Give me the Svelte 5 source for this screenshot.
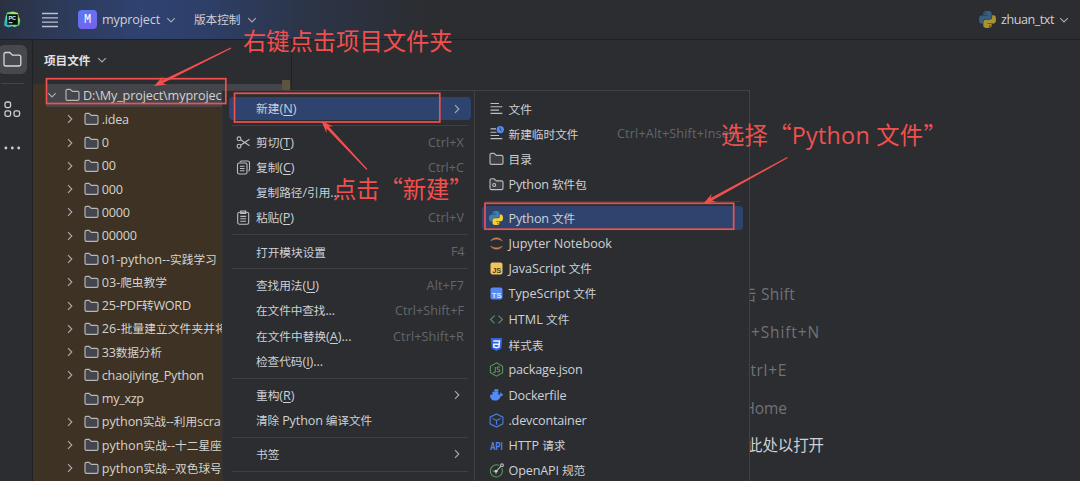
<script>
  const tree = [
    ['.idea', 27], ['0', 7], ['00', 14], ['000', 21], ['0000', 28], ['00000', 35],
    ['01-python--实践学习', 115], ['03-爬虫教学', 65], ['25-PDF转WORD', 89],
    ['26-批量建立文件夹并将', 125], ['33数据分析', 60], ['chaojiying_Python', 102],
    ['my_xzp', 42], ['python实战--利用scra', 119], ['python实战--十二星座', 120],
    ['python实战--双色球号', 120]
  ];

  const menu = [
    { t: '新建(&N)', w: 40.5, sub: true, on: true }, null,
    { t: '剪切(&T)', w: 38, icon: 'cut', key: 'Ctrl+X', kw: 36 },
    { t: '复制(&C)', w: 38.5, icon: 'copy', key: 'Ctrl+C', kw: 36 },
    { t: '复制路径/引用...', w: 84 },
    { t: '粘贴(&P)', w: 38, icon: 'paste', key: 'Ctrl+V', kw: 36 }, null,
    { t: '打开模块设置', w: 70, key: 'F4', kw: 13 }, null,
    { t: '查找用法(&U)', w: 63, key: 'Alt+F7', kw: 37.5 },
    { t: '在文件中查找...', w: 79, key: 'Ctrl+Shift+F', kw: 69 },
    { t: '在文件中替换(&A)...', w: 95.5, key: 'Ctrl+Shift+R', kw: 71 },
    { t: '检查代码(&I)...', w: 67 }, null,
    { t: '重构(&R)', w: 38.5, sub: true },
    { t: '清除 Python 编译文件', w: 116 }, null,
    { t: '书签', w: 23.5, sub: true }, null
  ];

  const files = [
    { t: '文件', w: 23.5, icon: 'lines' },
    { t: '新建临时文件', w: 70, icon: 'scratch', key: 'Ctrl+Alt+Shift+Insert', kw: 122 },
    { t: '目录', w: 23.5, icon: 'dir' },
    { t: 'Python 软件包', w: 78, icon: 'pkg' }, null,
    { t: 'Python 文件', w: 66.5, icon: 'python', on: true },
    { t: 'Jupyter Notebook', w: 103.5, icon: 'jupyter' },
    { t: 'JavaScript 文件', w: 83.5, icon: 'js' },
    { t: 'TypeScript 文件', w: 88, icon: 'ts' },
    { t: 'HTML 文件', w: 61, icon: 'html' },
    { t: '样式表', w: 35, icon: 'css' },
    { t: 'package.json', w: 74, icon: 'node' },
    { t: 'Dockerfile', w: 58, icon: 'docker' },
    { t: '.devcontainer', w: 78, icon: 'cube' },
    { t: 'HTTP 请求', w: 57, icon: 'api' },
    { t: 'OpenAPI 规范', w: 76.5, icon: 'openapi' }
  ];

  const hints = [
    { t: '击 Shift', w: 54, end: 795 },
    { t: 'Ctrl+Shift+N', w: 98, end: 820 },
    { t: 'Ctrl+E', w: 47, end: 787 },
    { t: 'Home', w: 43.5, end: 787 },
    { t: '此处以打开', w: 77, end: 824, strong: true }
  ];

  // Splits a label into Latin and CJK runs; "&" marks the mnemonic letter.
  function runs(text) {
    return (text.match(/&.|[\x20-\x25\x27-\x7e]+|[^\x00-\x7f]+/g) ?? []).map((s) => ({
      s: s[0] === '&' ? s[1] : s,
      latin: s.charCodeAt(0) < 128,
      key: s[0] === '&'
    }));
  }

  // Spreads the letters of a label over the given width.
  function fit(node, width) {
    const n = node.textContent.length;
    const natural = node.getBoundingClientRect().width;
    node.style.letterSpacing = `${(width - natural) / n}px`;
  }

  function arrow(x1, y1, x2, y2) {
    const len = Math.hypot(x2 - x1, y2 - y1);
    const ux = (x2 - x1) / len, uy = (y2 - y1) / len;
    const p = (a, b) => `${(x1 + ux * a - uy * b).toFixed(1)},${(y1 + uy * a + ux * b).toFixed(1)}`;
    return [p(0, -0.6), p(len - 9, -1.4), p(len - 12, -4.6), p(len, 0), p(len - 12, 4.6), p(len - 9, 1.4), p(0, 0.6)].join(' ');
  }
</script>

{#snippet label(text, width)}
  <span class="label" use:fit={width}>{#each runs(text) as r}<span class:latin={r.latin} class:key={r.key}>{r.s}</span>{/each}</span>
{/snippet}

{#snippet chevron(dir)}
  <svg class="chev" width="10" height="10" viewBox="0 0 10 10" fill="none" stroke="currentColor" stroke-width="1.15">
    {#if dir === 'down'}<path d="M1.2 3.2 5 7l3.800-3.800" />{:else}<path d="M3 1.200 6.800 5 3 8.800" />{/if}
  </svg>
{/snippet}

{#snippet folder(fill)}
  <svg width="15" height="14" viewBox="0 0 15 14"><path d="M1 2.700Q1 1.300 2.400 1.300H5.100L7.300 3.400H12.600Q14 3.400 14 4.800V11Q14 12.400 12.600 12.400H2.400Q1 12.400 1 11Z" {fill} stroke="#b9b7b5" stroke-width="1.150" /></svg>
{/snippet}

{#snippet python(size)}
  <svg width={size} height={size} viewBox="0 0 24 24">
    <path fill="#3d7fb0" d="M11.900 0C5.800 0 6.200 2.700 6.200 2.700V5.500H12V6.300H3.900S0 5.800 0 12s3.400 5.900 3.400 5.900h2.100v-2.800s-.1-3.400 3.400-3.400h5.800s3.200.1 3.200-3.100V3.200S18.400 0 11.900 0ZM8.700 1.800a1 1 0 1 1 0 2.100 1 1 0 0 1 0-2.100Z" />
    <path fill="#f5d033" d="M12.100 24c6.100 0 5.700-2.700 5.700-2.700v-2.800H12v-.8h8.100S24 18.200 24 12s-3.400-5.900-3.400-5.900h-2.100v2.800s.1 3.400-3.400 3.400H9.300s-3.200-.1-3.200 3.100v5.400S5.600 24 12.100 24Zm3.200-1.800a1 1 0 1 1 0-2.100 1 1 0 0 1 0 2.100Z" />
  </svg>
{/snippet}

{#snippet icon(name)}
  {#if name === 'dir'}{@render folder('#3c3e43')}
  {:else if name === 'python'}{@render python(14)}
  {:else if name}
    <svg width="15" height="15" viewBox="0 0 15 15" fill="none" stroke="#bcbec4" stroke-width="1.100">
      {#if name === 'cut'}
        <circle cx="3" cy="3.800" r="1.900" /><circle cx="3" cy="11.200" r="1.900" /><path d="M4.700 4.800 13.500 10.800M4.700 10.200 13.500 4.200" />
      {:else if name === 'copy'}
        <path d="M4 2.300V2.200Q4.200 1 5.500 1H11.500Q13.500 1 13.500 3V9.500Q13.500 11 12.300 11.200" /><rect x="1.500" y="3" width="9.500" height="11" rx="1.800" /><path d="M4 6.200h4.500M4 8.500h4.500M4 10.800h4.500" />
      {:else if name === 'paste'}
        <rect x="1.700" y="2.200" width="11" height="12" rx="1.800" /><path d="M4.700 1h5v2.400h-5zM4.300 6.400h5.800M4.300 8.800h5.800M4.300 11.200h5.800" />
      {:else if name === 'lines'}
        <path d="M1.500 2.500H10M1.500 5.800h11.800M1.500 9.100H10M1.500 12.400h11.800" />
      {:else if name === 'scratch'}
        <path d="M1.500 2.900H7M1.500 6.200h6M1.500 9.500H10M1.500 12.600h11.800" /><circle cx="11.300" cy="3.600" r="3.600" fill="#548af7" stroke="none" /><path d="M11.200 1.600v2.300l1.300 1" stroke="#25304a" stroke-width="1" />
      {:else if name === 'pkg'}
        <path d="M1 3.200Q1 1.800 2.400 1.800H5.100L7.300 3.900H12.600Q14 3.900 14 5.300V11.200Q14 12.600 12.600 12.600H2.400Q1 12.600 1 11.200Z" fill="#3c3e43" /><circle cx="5.200" cy="8" r="1.500" />
      {:else if name === 'jupyter'}
        <path d="M1.700 5C4 .7 11 .7 13.300 5 10.500 2.600 4.500 2.600 1.700 5ZM1.700 10C4 14.300 11 14.300 13.300 10 10.500 12.400 4.500 12.400 1.700 10Z" fill="#c77d4e" stroke="#c77d4e" stroke-width=".5" />
      {:else if name === 'js'}
        <rect x="1.500" y="1.500" width="12" height="12" rx="2" fill="#f2c55c" stroke="none" /><text x="7.800" y="11.500" fill="#4a3b1b">JS</text>
      {:else if name === 'ts'}
        <rect x="1.500" y="1.500" width="12" height="12" rx="2" fill="#548af7" stroke="none" /><text x="7.600" y="11.500" fill="#dce8ff">TS</text>
      {:else if name === 'html'}
        <path d="M5.600 3.700 1.500 7.500l4.100 3.800M9.400 3.700l4.100 3.800-4.100 3.800" stroke="#57965c" />
      {:else if name === 'css'}
        <path d="M1.800 1h11.400l-.9 10.600L7.500 14l-4.800-2.400Z" fill="#3262dc" stroke="none" /><path d="M4.300 3.900h6.200l-.5 6-2.500.9-2.700-.9-.1-2.600h5.400" stroke="#eaf0ff" stroke-width="1.500" />
      {:else if name === 'node'}
        <path d="M7.500.8 13.600 4.200v6.600L7.500 14.200 1.400 10.800V4.200Z" stroke="#57965c" /><path d="M6.300 4.900v4.600q0 1-1 1t-1.200-.7M10.700 5.600Q10.300 4.800 9.300 4.900q-1.300 0-1.200 1.100c.1 1.600 2.800.8 2.800 2.700 0 1.400-2.300 1.400-2.900.2" stroke="#57965c" />
      {:else if name === 'docker'}
        <path d="M1 6.800h10.200q-.5-1.400.3-2.600 1.100.7 1.200 1.800 1 0 1.600.4-.6 1.500-2.500 1.500c-1 3.500-3.500 4.700-6 4.700C2.800 12.600 1.100 10.500 1 6.800ZM3.400 3.800h4.400v3H3.400zM5.300 1.200h4v2.400h-4zM7.800 3.800h1.600v3H7.800z" fill="#548af7" stroke="none" />
      {:else if name === 'cube'}
        <path d="M7.500.9 13.900 4.200v6.600L7.500 14.100 1.100 10.800V4.200ZM3.500 5.400l4 2 4-2M7.500 7.400v4.400" stroke="#4a7ee0" />
      {:else if name === 'api'}
        <text class="api" x="7.600" y="11.800" fill="#5086ee" textLength="12.500" lengthAdjust="spacingAndGlyphs">API</text>
      {:else if name === 'openapi'}
        <path d="M10.200 2.500A6.100 6.100 0 1 0 12.900 5.300" stroke="#57965c" /><path d="M3.500 8h2M7 11.500v-1.600" stroke="#57965c" /><path d="m7.300 8.200 4.800-5" /><circle cx="13" cy="2.300" r="1.400" /><circle cx="7" cy="8.300" r="1.500" fill="#ced0d6" stroke="none" />
      {/if}
    </svg>
  {/if}
{/snippet}

{#snippet entries(items)}
  {#each items as it}
    {#if it}
      <div class="item" class:on={it.on}>
        <span class="ico">{@render icon(it.icon)}</span>
        {@render label(it.t, it.w)}
        {#if it.key}<span class="shortcut">{@render label(it.key, it.kw)}</span>{/if}
        {#if it.sub}<span class="more">{@render chevron('right')}</span>{/if}
      </div>
    {:else}
      <div class="sep"></div>
    {/if}
  {/each}
{/snippet}

<div class="ide">
  <header>
    <svg class="logo" width="17" height="17" viewBox="0 0 17 17">
      <defs><linearGradient id="lg" x1="0" y1="0" x2="1" y2="1"><stop offset="0" stop-color="#21d789" /><stop offset=".5" stop-color="#d8ef55" /><stop offset="1" stop-color="#27c9a0" /></linearGradient></defs>
      <path d="M3 1.500 9 .4l5 1.500.6 3.900L16.300 9l-1 5.300-5 2-2-1.300-3.500 1.300L.6 14.800.8 9.500Z" fill="url(#lg)" />
      <path d="M.8 9.500 2 4l1 9 5 2-3.200 1.300L.6 14.800Z" fill="#18b9e8" />
      <rect x="3.200" y="3.200" width="10.600" height="10.600" fill="#07110e" />
      <text x="8.200" y="8.600" fill="#e7f0ea">PC</text><path d="M4.700 11.700h3.800" stroke="#e7f0ea" />
    </svg>
    <svg class="burger" width="16" height="16" viewBox="0 0 16 16" stroke="#b9c0ce" stroke-width="1.300"><path d="M0 1.500h16M0 5.800h16M0 10.200h16M0 14.500h16" /></svg>
    <span class="badge">M</span>
    <span class="proj">{@render label('myproject', 58)}</span>
    {@render chevron('down')}
    <span class="vcs">{@render label('版本控制', 46.500)}</span>
    {@render chevron('down')}
    <div class="config">
      <span class="dim">{@render python(17)}</span>
      {@render label('zhuan_txt', 53)}
      {@render chevron('down')}
    </div>
  </header>

  <div class="body">
    <nav>
      <span class="tool active"><svg width="19" height="17" viewBox="0 0 19 17"><path d="M1 3.200Q1 1.500 2.700 1.500H6.800L9.400 4.200H16Q17.800 4.200 17.800 6V13.300Q17.800 15 16 15H2.700Q1 15 1 13.300Z" fill="none" stroke="#d5d6da" stroke-width="1.300" /></svg></span>
      <span class="rule"></span>
      <svg class="blocks" width="17" height="17" viewBox="0 0 17 17" fill="none" stroke="#ced0d6" stroke-width="1.300"><rect x="1" y="1" width="5.600" height="5.600" rx="1.800" /><rect x="1" y="9.800" width="5.600" height="5.600" rx="1.800" /><rect x="10" y="9.800" width="5.600" height="5.600" rx="1.800" /></svg>
      <svg width="17" height="4" viewBox="0 0 17 4" fill="#ced0d6"><circle cx="1.900" cy="2" r="1.400" /><circle cx="8.300" cy="2" r="1.400" /><circle cx="14.700" cy="2" r="1.400" /></svg>
    </nav>

    <aside>
      <div class="title">{@render label('项目文件', 46.500)}{@render chevron('down')}</div>
      <div class="tree">
        <div class="root">{@render chevron('down')}{@render folder('#43454a')}{@render label('D:\\My_project\\myprojec', 138.500)}</div>
        {#each tree as [name, w]}
          <div class="row">
            <span class="twist">{#if name !== 'my_xzp'}{@render chevron('right')}{/if}</span>
            {@render folder('#43454f')}
            {@render label(name, w)}
          </div>
        {/each}
        <span class="thumb"></span>
      </div>
    </aside>

    <main>
      {#each hints as h}
        <div class="hint" class:strong={h.strong} style:width="{h.end - 292}px">{@render label(h.t, h.w)}</div>
      {/each}
    </main>
  </div>

  <div class="menu context">{@render entries(menu)}</div>
  <div class="menu submenu">{@render entries(files)}</div>

  <svg class="marks" width="1080" height="481" viewBox="0 0 1080 481">
    <g fill="none" stroke="#f1504f" stroke-width="1.700">
      <rect x="46.500" y="78.700" width="179.300" height="24.800" />
      <rect x="234.500" y="93.300" width="205.300" height="28.700" />
      <rect x="485" y="203.300" width="248.700" height="25.900" />
    </g>
    <g fill="#f1504f">
      <polygon points={arrow(231, 48, 154, 86)} />
      <polygon points={arrow(367, 169.500, 321.500, 121)} />
      <polygon points={arrow(787.500, 157.500, 703.500, 203.500)} />
    </g>
  </svg>
  <div class="note n1">{@render label('右键点击项目文件夹', 209.500)}</div>
  <div class="note n2">{@render label('点击“新建”', 139.500)}</div>
  <div class="note n3">{@render label('选择“Python 文件”', 226)}</div>
</div>

<style>
  :global(body) { background: #2b2d30; }
  .ide {
    position: relative;
    display: flex;
    flex-direction: column;
    width: 1080px;
    height: 481px;
    overflow: hidden;
    background: #2b2d30;
    color: #ced0d6;
    font: 11.7px/1 "Noto Sans CJK SC", sans-serif;
  }
  svg { flex: none; display: block; }
  .label { flex: none; white-space: pre; line-height: 16px; }
  .latin { font-family: "Open Sans", "Noto Sans", sans-serif; font-size: 1.08em; }
  .key { text-decoration: underline; text-underline-offset: 2px; }
  .chev { color: #a9abb1; }

  header {
    flex: none;
    display: flex;
    align-items: center;
    box-sizing: border-box;
    height: 40px;
    padding-left: 4px;
    border-bottom: 1px solid #1f2023;
    background: linear-gradient(90deg, #2b3142 0, #2d3a59 60px, #2f4270 140px, #2e3f69 200px, #2c3549 300px, #2b2d30 430px);
  }
  .logo text { font: bold 5.500px "Liberation Sans", sans-serif; text-anchor: middle; }
  .burger { margin-left: 21px; }
  .badge {
    display: grid;
    place-items: center;
    width: 19px;
    height: 19px;
    margin-left: 20px;
    border-radius: 4px;
    background: linear-gradient(160deg, #5b7af5, #7760ea);
    color: #fff;
    font: 12px "Liberation Mono", monospace;
  }
  .proj { margin: 0 6px 0 5px; }
  .vcs { margin: -1px 6px 0 18px; }
  .config { display: flex; align-items: center; gap: 5px; margin-left: auto; padding-right: 11px; }
  .dim { opacity: .62; }

  .body { display: flex; flex: 1; min-height: 0; }
  nav {
    flex: none;
    display: flex;
    flex-direction: column;
    align-items: center;
    box-sizing: border-box;
    width: 33px;
    padding: 5px 7px 0 0;
    border-right: 1px solid #202124;
  }
  .tool { display: grid; place-items: center; width: 29px; height: 29px; border-radius: 6px; }
  .active { margin-left: 0; background: #46484d; }
  .rule { width: 23px; height: 1px; margin: 9px 0 17px; background: #43454a; }
  .blocks { margin-bottom: 28px; }

  aside { flex: none; display: flex; flex-direction: column; box-sizing: border-box; width: 259px; border-right: 1px solid #202124; }
  .title { display: flex; align-items: center; gap: 6px; height: 39px; padding-left: 11px; font-weight: 600; color: #e0e1e5; flex: none; }
  .tree { position: relative; flex: 1; background: #3d3223; padding-top: 3px; margin-top: 5px; color: #d4d2d0; }
  .root {
    display: flex;
    align-items: center;
    height: 23.300px;
    margin: -3.500px 9px 1px 13px;
    padding-left: 1px;
    background: #43454a;
  }
  .root .chev { margin-right: 8px; }
  .root .label { margin-left: 3px; }
  .row { display: flex; align-items: center; height: 23.270px; padding-left: 32px; }
  .twist { width: 19px; }
  .row .label { margin-left: 2.800px; }
  .thumb { position: absolute; right: 1px; top: -4px; width: 8px; height: 12px; background: #5d5440; }

  main { flex: 1; padding-top: 234px; font-size: 15.500px; color: #6f7277; }
  .hint { display: flex; align-items: center; justify-content: flex-end; height: 38px; }
  .hint .latin { font-size: 1em; }
  .strong { color: #ced0d6; }
  .hint.strong .label { margin-top: -2px; }

  .menu { position: absolute; top: 90px; bottom: 0; box-sizing: border-box; border: 1px solid #3f4145; border-bottom: 0; background: #2b2d30; overflow: hidden; }
  .context { left: 222px; width: 253px; padding: 5px 3.500px 0 6px; border-left-color: #303236; }
  .submenu { left: 474px; width: 276px; padding: 5px 6px 0 7px; }
  .item { display: flex; align-items: center; height: 25.150px; padding: 0 6px 0 7px; border-radius: 4px; }
  .submenu .item { height: 25.300px; }
  .on { background: #2e436e; box-shadow: inset 0 1px #2b2d30, inset 0 -1px #2b2d30; }
  .ico { flex: none; width: 15px; margin-right: 5px; }
  .submenu .item { padding-left: 7px; }
  .submenu .ico { margin-right: 4.500px; }
  .shortcut { margin-left: auto; color: #63666b; }
  .context .shortcut { margin-right: .5px; }
  .submenu .shortcut { margin-left: 38.500px; }
  .more { margin-left: auto; padding-right: 3px; }
  .sep { height: 1px; margin: 3.900px 3px; background: #3e4044; }
  .submenu .sep { margin: 3.600px 3px; }
  .ico text { font: bold 7.500px "Liberation Sans", sans-serif; text-anchor: middle; stroke: none; }
  .ico .api { font: bold 10.500px "Roboto", sans-serif; }

  .marks { position: absolute; inset: 0; }
  .note { position: absolute; color: #f1504f; font-size: 23.300px; }
  .note .label { line-height: 30px; }
  .note .latin { font-size: 1em; }
  .n1 { left: 243px; top: 25px; }
  .n2 { left: 333px; top: 173px; }
  .n3 { left: 721px; top: 119px; }
</style>
